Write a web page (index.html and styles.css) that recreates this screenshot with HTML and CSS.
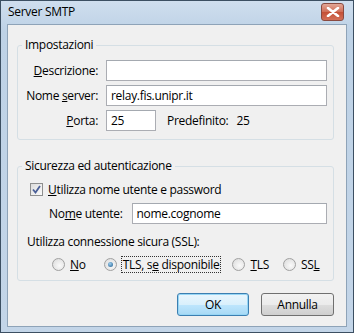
FILE: index.html
```html
<!DOCTYPE html>
<html lang="it">
<head>
    <meta charset="UTF-8">
    <title>Server SMTP</title>
    <link rel="stylesheet" href="styles.css">
</head>
<body>
    <div class="window">
        <div class="titlebar">
            <span class="title">Server SMTP</span>
            <span class="close">
                <svg width="14" height="10" viewBox="0 0 14 10"><path d="M2 1 L12 9 M12 1 L2 9" stroke="#fff" stroke-width="2.6" stroke-linecap="round"/></svg>
            </span>
        </div>
        <div class="client">
            <fieldset class="group group-settings">
                <legend>Impostazioni</legend>
                <div class="row">
                    <label class="lbl"><u>D</u>escrizione:</label>
                    <div class="field"></div>
                </div>
                <div class="row">
                    <label class="lbl">Nome <u>s</u>erver:</label>
                    <div class="field">relay.fis.unipr.it</div>
                </div>
                <div class="row">
                    <label class="lbl"><u>P</u>orta:</label>
                    <div class="field field-port">25</div>
                    <span class="default">Predefinito:</span>
                    <span class="default-val">25</span>
                </div>
            </fieldset>

            <fieldset class="group group-security">
                <legend>Sicurezza ed autenticazione</legend>
                <div class="check-row">
                    <span class="checkbox">
                        <svg width="9" height="9" viewBox="0 0 9 9"><path d="M1 4.5 L3.5 7.5 L8 1" fill="none" stroke="#4a5f97" stroke-width="1.8"/></svg>
                    </span>
                    <span><u>U</u>tilizza nome utente e password</span>
                </div>
                <div class="user-row">
                    <label class="lbl-user">No<u>m</u>e utente:</label>
                    <div class="field">nome.cognome</div>
                </div>
                <div class="ssl-caption">Utilizza connessione sicura (SSL):</div>
                <div class="radios">
                    <span class="radio-item item-no"><span class="radio"></span><u>N</u>o</span>
                    <span class="radio-item item-tls-opt"><span class="radio checked"></span><span class="focus">TLS, s<u>e</u> disponibile</span></span>
                    <span class="radio-item item-tls"><span class="radio"></span><u>T</u>LS</span>
                    <span class="radio-item"><span class="radio"></span>SS<u>L</u></span>
                </div>
            </fieldset>

            <div class="buttons">
                <button class="btn btn-default">OK</button>
                <button class="btn">Annulla</button>
            </div>
        </div>
    </div>
</body>
</html>
```
FILE: styles.css
```css
body {
    margin: 0;
    font-family: "Open Sans", "Noto Sans", sans-serif;
    font-size: 12px;
    letter-spacing: -0.3px;
    color: #000;
    white-space: nowrap;
}

.window {
    width: 354px;
    height: 333px;
    box-sizing: border-box;
    border: 1px solid #3c4f62;
    background: linear-gradient(#cfdeee, #bed2e6 30px, #c3d5e8);
    padding: 0 6px 5px 6px;
    display: flex;
    flex-direction: column;
}

.titlebar {
    height: 23px;
    display: flex;
    align-items: flex-start;
}

.title {
    padding-top: 2px;
    padding-left: 1px;
}

.close {
    margin-left: auto;
    margin-top: 2px;
    margin-right: 3px;
    width: 21px;
    height: 16px;
    border: 1px solid #8a4a40;
    border-radius: 3px;
    background: linear-gradient(#e3a797, #d06c55 50%, #c44f35 51%, #d27058);
    display: flex;
    align-items: center;
    justify-content: center;
}

.client {
    flex: 1;
    background: #f0f0f0;
    border: 1px solid #8ea3b8;
    padding: 12px 12px 0 9px;
}

.group {
    margin: 0;
    border: 1px solid #d5dfe5;
    border-radius: 3px;
    padding: 0;
    box-sizing: border-box;
}

.group legend {
    padding: 0 3px;
    margin-left: 4px;
    line-height: 16px;
}

.group-settings {
    height: 103px;
    padding: 7px 6px 0 0;
}

.row {
    display: flex;
    align-items: center;
    height: 21px;
    margin-bottom: 4px;
}

.lbl {
    width: 80px;
    text-align: right;
    margin-right: 8px;
}

.field {
    flex: 1;
    height: 21px;
    box-sizing: border-box;
    background: #fff;
    border: 1px solid #abadb3;
    border-top-color: #a4a9b0;
    padding: 1px 4px;
    line-height: 17px;
}

.field-port {
    flex: none;
    width: 50px;
}

.default {
    margin-left: 11px;
}

.default-val {
    margin-left: 8px;
}

.group-security {
    margin-top: 18px;
    height: 123px;
    padding: 5px 6px 0 0;
}

.check-row {
    display: flex;
    align-items: center;
    height: 20px;
    padding-left: 12px;
}

.checkbox {
    width: 11px;
    height: 11px;
    border: 1px solid #8e8f8f;
    background: linear-gradient(135deg, #dcdcdc, #fbfbfb);
    margin-right: 5px;
    display: flex;
    align-items: center;
    justify-content: center;
}

.user-row {
    display: flex;
    align-items: center;
    height: 21px;
    margin-top: 4px;
    padding-left: 31px;
}

.lbl-user {
    margin-right: 9px;
}

.ssl-caption {
    margin-top: 10px;
    padding-left: 9px;
    line-height: 16px;
}

.radios {
    display: flex;
    align-items: center;
    height: 20px;
    margin-top: 4px;
    padding-left: 34px;
}

.radio-item {
    display: flex;
    align-items: center;
}

.item-no { margin-right: 18px; }
.item-tls-opt { margin-right: 12px; }
.item-tls { margin-right: 14px; }

.radio {
    width: 11px;
    height: 11px;
    border: 1px solid #a0a0a0;
    border-radius: 50%;
    background: radial-gradient(circle at 60% 60%, #fafafa, #d8d8d8);
    margin-right: 5px;
    display: flex;
    align-items: center;
    justify-content: center;
}

.radio.checked::after {
    content: "";
    width: 5px;
    height: 5px;
    border-radius: 50%;
    background: radial-gradient(circle at 40% 35%, #9fd0f0, #1d5a8c);
}

.focus {
    outline: 1px dotted #333;
    padding: 0 1px;
    line-height: 15px;
}

.buttons {
    display: flex;
    justify-content: flex-end;
    gap: 12px;
    margin-top: 12px;
}

.btn {
    font-family: inherit;
    font-size: 12px;
    letter-spacing: -0.3px;
    width: 73px;
    height: 23px;
    border: 1px solid #707070;
    border-radius: 3px;
    background: linear-gradient(#f2f2f2, #ebebeb 50%, #dddddd 51%, #cfcfcf);
    color: #000;
    padding: 0;
}

.btn-default {
    width: 72px;
    border-color: #3c7fb1;
    box-shadow: inset 0 0 0 1px #97d6f5;
    background: linear-gradient(#eaf6fd, #d9f0fc 50%, #bee6fd 51%, #a7d9f5);
}
```
